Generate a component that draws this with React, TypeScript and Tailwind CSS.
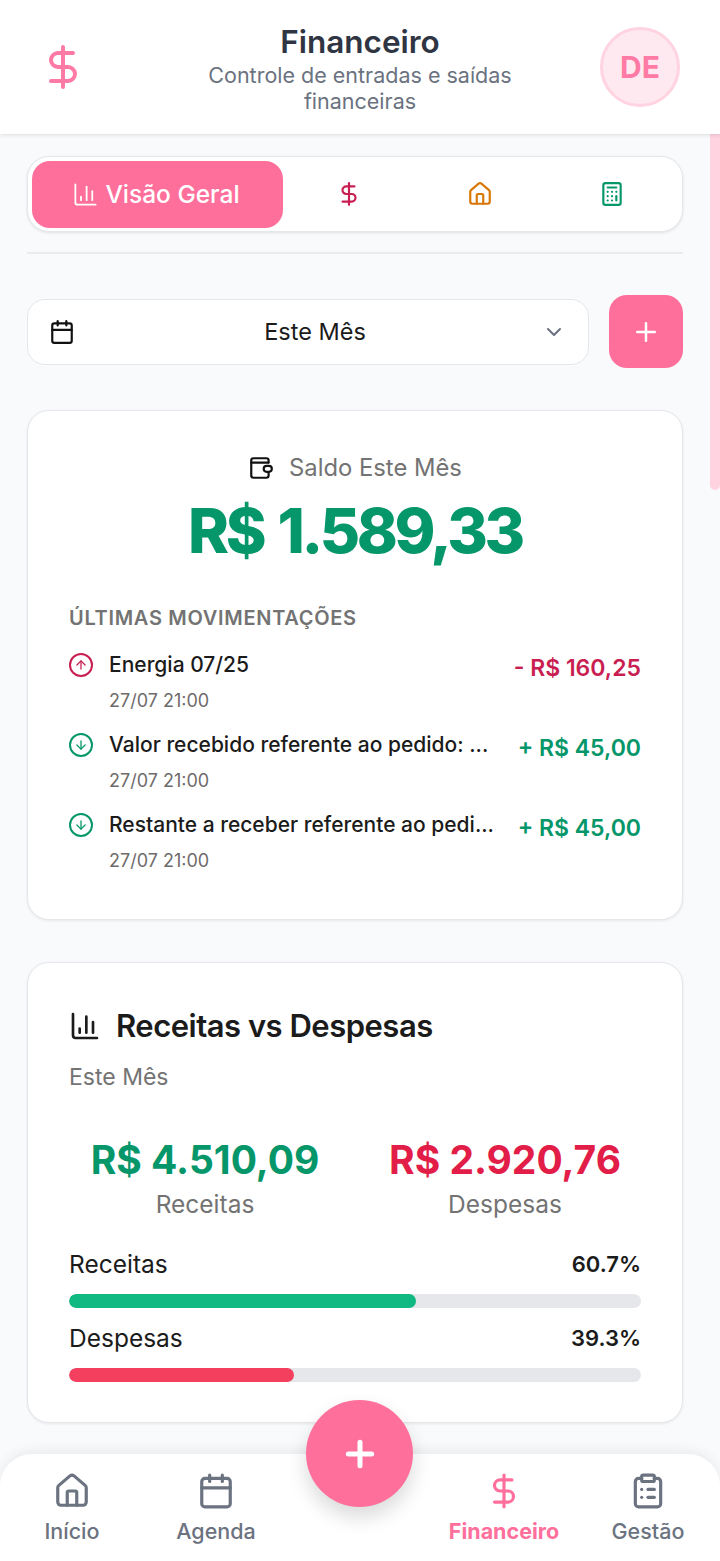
import { ArrowDown, ArrowUp, Calculator, Calendar, ChartColumn, ChevronDown, ClipboardList, DollarSign, House, Plus } from "lucide-react";

const MOVES = [
	{ name: "Energia 07/25", when: "27/07 21:00", value: "- R$ 160,25", out: true },
	{ name: "Valor recebido referente ao pedido: ...", when: "27/07 21:00", value: "+ R$ 45,00", out: false },
	{ name: "Restante a receber referente ao pedi...", when: "27/07 21:00", value: "+ R$ 45,00", out: false },
];

function WalletIcon() {
	return (
		<svg width="26" height="26" viewBox="0 0 24 24" fill="none" stroke="currentColor" strokeWidth="2" strokeLinecap="round" strokeLinejoin="round" className="text-[#111]">
			<path d="M19 7V5a2 2 0 0 0-2-2H5a2 2 0 0 0-2 2v14a2 2 0 0 0 2 2h12a2 2 0 0 0 2-2v-3" />
			<path d="M3 7h16" />
			<rect x="14.5" y="10" width="7.5" height="5.5" rx="2.75" />
		</svg>
	);
}

function Move({ name, when, value, out }: (typeof MOVES)[number]) {
	return (
		<div className="flex items-start h-[80px]">
			<div
				className={`mt-[3px] w-[24px] h-[24px] rounded-full border-2 flex items-center justify-center shrink-0 ${out ? "border-[#c81e52] text-[#c81e52]" : "border-[#059669] text-[#059669]"}`}>
				{out ? <ArrowUp size={14} strokeWidth={2.2} /> : <ArrowDown size={14} strokeWidth={2.2} />}
			</div>
			<div className="ml-[16px] shrink-0">
				<div className="whitespace-nowrap text-[21px] leading-[30px] font-medium text-[#1b1b1b]">{name}</div>
				<div className="mt-[7px] text-[18px] leading-[28px] text-[#6f6b6b]">{when}</div>
			</div>
			<div
				className={`ml-auto mt-[2px] text-[23px] leading-[32px] font-semibold whitespace-nowrap ${out ? "text-[#c81e52]" : "text-[#059669]"}`}>
				{value}
			</div>
		</div>
	);
}

function Bar({ label, pct, width, color }: { label: string; pct: string; width: string; color: string }) {
	return (
		<div>
			<div className="flex justify-between items-center h-[34px]">
				<span className="text-[24.5px] text-[#1b1b1b]">{label}</span>
				<span className="text-[22px] font-semibold text-[#1b1b1b]">{pct}</span>
			</div>
			<div className="mt-[13px] h-[14px] rounded-full bg-[#e5e7eb] overflow-hidden">
				<div className={`h-full rounded-full ${color}`} style={{ width }} />
			</div>
		</div>
	);
}

function NavItem({ icon, label, active, className }: { icon: React.ReactNode; label: string; active?: boolean; className: string }) {
	return (
		<div className={`flex flex-col items-center gap-[6px] ${className} ${active ? "text-[#ff6f9c]" : "text-[#6b7280]"}`}>
			{icon}
			<span className={`text-[21.5px] leading-[30px] ${active ? "font-bold" : "font-medium"}`}>{label}</span>
		</div>
	);
}

export default function App() {
	return (
		<div className="relative h-[1561px] w-[720px] overflow-hidden bg-[#f9fafb] font-['Inter','Liberation_Sans',sans-serif]">
			<header className="h-[134px] bg-white shadow-[0_1px_4px_rgba(0,0,0,0.12)] flex items-center pl-[39px] pr-[40px] relative z-10">
				<div className="w-[81px] shrink-0">
					<DollarSign size={48} strokeWidth={2} className="text-[#ff7aa5]" />
				</div>
				<div className="flex-1 text-center mt-[2px]">
					<h1 className="text-[31.5px] leading-[38px] font-semibold text-[#2f3542]">Financeiro</h1>
					<p className="mx-auto mt-[1px] w-[320px] text-[21.5px] leading-[26px] text-[#6b7280]">
						Controle de entradas e saídas financeiras
					</p>
				</div>
				<div className="w-[80px] h-[80px] rounded-full bg-[#ffe9f0] border-[3px] border-[#ffd3e0] flex items-center justify-center text-[30px] font-bold text-[#ff7aa5]">
					DE
				</div>
			</header>

			<main className="px-[27px] pr-[37px] pt-[22px]">
				<div className="h-[76px] rounded-[22px] bg-white border border-[#e5e7eb] shadow-[0_1px_3px_rgba(0,0,0,0.1)] flex items-center pl-[4px] pr-[4px]">
					<div className="w-[251px] h-[67px] rounded-[18px] bg-[#ff6f9c] text-white flex items-center justify-center gap-[6px] pr-[3px] text-[24.5px] font-medium">
						<ChartColumn size={27} strokeWidth={1.6} />
						Visão Geral
					</div>
					<div className="flex-1 grid grid-cols-3 justify-items-center">
						<DollarSign size={26} strokeWidth={2} className="text-[#c81e52]" />
						<House size={26} strokeWidth={2} className="text-[#d97706]" />
						<Calculator size={26} strokeWidth={2} className="text-[#059669]" />
					</div>
				</div>

				<div className="mt-[20px] h-[2px] bg-[#e9ebee]" />

				<div className="mt-[41px] flex items-center gap-[20px]">
					<div className="relative flex-1 h-[66px] rounded-[18px] bg-white border border-[#e5e7eb] flex items-center justify-center pl-[14px] text-[23.5px] text-[#1b1b1b]">
						<Calendar size={26} strokeWidth={2} className="absolute left-[21px] text-[#111]" />
						Este Mês
						<ChevronDown size={24} strokeWidth={2} className="absolute right-[22px] text-[#6b7280]" />
					</div>
					<div className="w-[74px] h-[73px] rounded-[18px] bg-[#ff6f9c] flex items-center justify-center text-white">
						<Plus size={30} strokeWidth={2} />
					</div>
				</div>

				<section className="mt-[42px] h-[510px] rounded-[22px] bg-white border border-[#e5e7eb] shadow-[0_1px_3px_rgba(0,0,0,0.08)] px-[41px] pt-[39px]">
					<div className="flex items-center justify-center gap-[15px] text-[23.8px] leading-[36px] text-[#737373]">
						<WalletIcon />
						Saldo Este Mês
					</div>
					<div className="mt-[5px] text-center text-[62px] leading-[80px] font-extrabold tracking-[-3.4px] [word-spacing:4px] text-[#059669]">R$ 1.589,33</div>
					<h2 className="mt-[32px] text-[20px] leading-[30px] font-semibold tracking-[0.7px] text-[#737373]">ÚLTIMAS MOVIMENTAÇÕES</h2>
					<div className="mt-[17px]">
						{MOVES.map((m) => (
							<Move key={m.name} {...m} />
						))}
					</div>
				</section>

				<section className="mt-[42px] h-[461px] rounded-[22px] bg-white border border-[#e5e7eb] shadow-[0_1px_3px_rgba(0,0,0,0.08)] px-[41px] pt-[44px]">
					<div className="flex items-center gap-[15px]">
						<ChartColumn size={32} strokeWidth={2} className="text-[#1b1b1b]" />
						<h2 className="text-[31px] leading-[38px] font-semibold tracking-[-0.5px] text-[#1b1b1b]">Receitas vs Despesas</h2>
					</div>
					<p className="mt-[15px] text-[23px] leading-[34px] text-[#737373]">Este Mês</p>
					<div className="mt-[41px] grid grid-cols-2 gap-[28px]">
						<div className="text-center">
							<div className="text-[39px] leading-[50px] font-bold text-[#059669]">R$ 4.510,09</div>
							<div className="mt-[2px] text-[24.5px] leading-[34px] text-[#737373]">Receitas</div>
						</div>
						<div className="text-center">
							<div className="text-[39px] leading-[50px] font-bold text-[#e11d48]">R$ 2.920,76</div>
							<div className="mt-[2px] text-[24.5px] leading-[34px] text-[#737373]">Despesas</div>
						</div>
					</div>
					<div className="mt-[26px] flex flex-col gap-[13px]">
						<Bar label="Receitas" pct="60.7%" width="60.7%" color="bg-[#10b981]" />
						<Bar label="Despesas" pct="39.3%" width="39.3%" color="bg-[#f43f5e]" />
					</div>
				</section>
			</main>

			<div className="absolute right-0 top-[134px] w-[10px] h-[356px] bg-[#ffd3e0] rounded-b-full" />

			<nav className="absolute left-0 right-0 bottom-0 h-[107px] rounded-t-[32px] bg-white shadow-[0_-4px_12px_rgba(0,0,0,0.06)] flex pt-[18px]">
				<NavItem icon={<House size={38} strokeWidth={2} />} label="Início" className="w-[144px]" />
				<NavItem icon={<Calendar size={38} strokeWidth={2} />} label="Agenda" className="w-[144px]" />
				<div className="w-[144px]" />
				<NavItem icon={<DollarSign size={38} strokeWidth={2} />} label="Financeiro" active className="w-[144px]" />
				<NavItem icon={<ClipboardList size={38} strokeWidth={2} />} label="Gestão" className="w-[144px]" />
			</nav>
			<div className="absolute left-[306px] top-[1400px] w-[107px] h-[107px] rounded-full bg-[#ff6f9c] shadow-[0_10px_20px_rgba(0,0,0,0.15)] flex items-center justify-center text-white">
				<Plus size={40} strokeWidth={3} />
			</div>
		</div>
	);
}
